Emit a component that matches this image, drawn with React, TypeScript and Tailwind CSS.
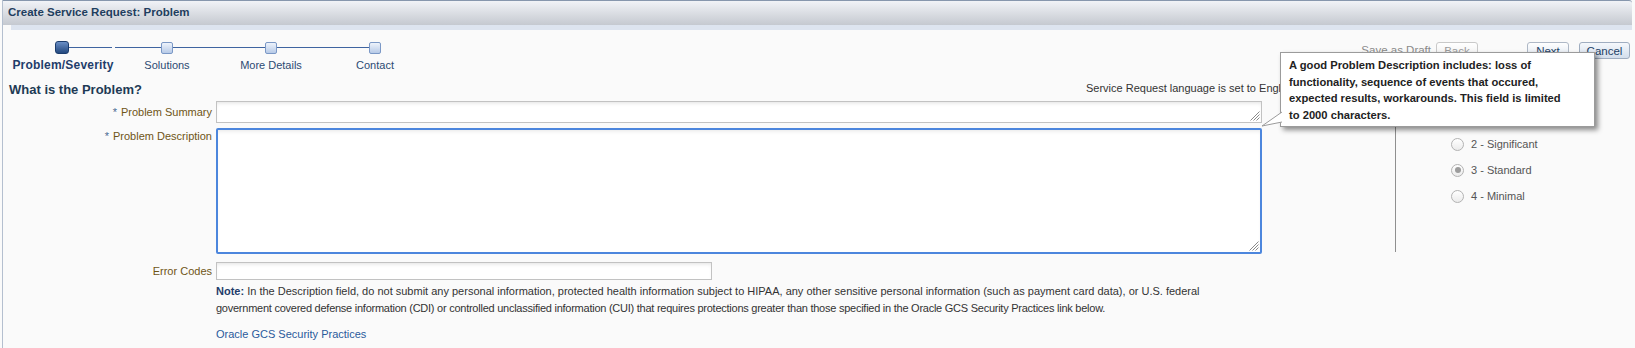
import React from "react";

// Create Service Request — "Problem" step, with the description hint bubble open.

const steps = [
  { label: "Problem/Severity", current: true },
  { label: "Solutions", current: false },
  { label: "More Details", current: false },
  { label: "Contact", current: false },
];

const severities = [
  { label: "1 - Critical", checked: false },
  { label: "2 - Significant", checked: false },
  { label: "3 - Standard", checked: true },
  { label: "4 - Minimal", checked: false },
];

function ResizeGrip() {
  return (
    <svg
      aria-hidden
      width="11"
      height="11"
      viewBox="0 0 11 11"
      className="absolute bottom-[1px] right-[1px]"
    >
      <path d="M10.5 1.5 L1.5 10.5 M10.5 4.5 L4.5 10.5 M10.5 7.5 L7.5 10.5" stroke="#8a8a8a" strokeWidth="1" />
    </svg>
  );
}

function TrainStep({ label, current, first, last }: { label: string; current: boolean; first: boolean; last: boolean }) {
  return (
    <div className="flex w-[104px] flex-col items-center">
      <div className="flex h-[13px] w-full items-center">
        <div className={"h-px flex-1 " + (first ? "bg-transparent" : "bg-[#3f64a0]")} />
        {current ? (
          <div className="h-[13px] w-[14px] rounded-[3px] border border-[#1c3d6e] bg-linear-to-b from-[#6a8fc6] to-[#23497f]" />
        ) : (
          <div className="h-[12px] w-[12px] rounded-[2px] border border-[#7b98c6] bg-linear-to-b from-[#eef3fb] to-[#b7cae7]" />
        )}
        <div
          className={
            "h-px flex-1 " + (last ? "bg-transparent" : "bg-[#3f64a0]") + (first ? " mr-[3px]" : "")
          }
        />
      </div>
      <div
        className={
          "mt-[4px] h-[14px] whitespace-nowrap leading-[14px] " +
          (current ? "text-[12px] font-bold tracking-[0.2px] text-[#1f3d6b]" : "text-[11px] text-[#2c4a73]")
        }
      >
        {label}
      </div>
    </div>
  );
}

function Radio({ label, checked }: { label: string; checked: boolean }) {
  return (
    <div className="flex h-[26px] items-center gap-[7px]">
      <span className="flex h-[13px] w-[13px] items-center justify-center rounded-full border border-[#b3b3b3] bg-linear-to-b from-white to-[#ebebeb]">
        {checked ? <span className="h-[6px] w-[6px] rounded-full bg-[#9c9c9c]" /> : null}
      </span>
      <span className="text-[11px] text-[#555]">{label}</span>
    </div>
  );
}

export default function App() {
  return (
    <div
      className="relative h-[348px] w-[1635px] overflow-hidden bg-[#fafafa] text-[11px] text-[#333]"
      style={{ fontFamily: '"Liberation Sans", Arial, sans-serif' }}
    >
      <div className="ml-[2px] mr-[3px] h-full border-l border-[#b4bfcf]">
        {/* Header */}
        <div className="flex h-[25px] items-center rounded-tr-[3px] border-t border-[#8797ad] bg-linear-to-b from-[#f1f3f7] to-[#c5c9d0] pl-[5px]">
          <span className="text-[11.5px] font-bold text-[#1f3e5e]">Create Service Request: Problem</span>
        </div>
        <div className="ml-[8px] h-[5px] bg-[#dde4ef]" />

        {/* Train + actions */}
        <div className="flex h-[51px]">
          <div className="ml-[8px] mt-[11px] flex">
            {steps.map((s, i) => (
              <TrainStep key={s.label} label={s.label} current={s.current} first={i === 0} last={i === steps.length - 1} />
            ))}
          </div>
          <div className="ml-auto mr-[2px] mt-[12px] flex h-[17px] items-center">
            <span className="mr-[5px] text-[11.5px] text-[#8a8a8a]">Save as Draft</span>
            <button className="h-[17px] w-[42px] rounded-[3px] border border-[#c9c9c9] bg-linear-to-b from-white to-[#eeeeee] text-[11.5px] text-[#9a9a9a]">
              Back
            </button>
            <button className="ml-[49px] h-[17px] w-[42px] rounded-[3px] border border-[#aeb8c6] bg-linear-to-b from-white to-[#dde5ef] text-[11.5px] text-[#1d3f66]">
              Next
            </button>
            <button className="ml-[10px] h-[17px] w-[51px] rounded-[3px] border border-[#9fadc0] bg-linear-to-b from-[#f5f8fc] to-[#d3deec] text-[11.5px] text-[#1d3f66]">
              Cancel
            </button>
          </div>
        </div>

        {/* Section title */}
        <div className="flex h-[18px] items-center">
          <div className="w-[1083px] pl-[6px] text-[13px] font-bold leading-[18px] text-[#1e3a55]">What is the Problem?</div>
          <div className="-mt-[3px] whitespace-nowrap text-[11px] text-[#333]">Service Request language is set to English.</div>
        </div>

        {/* Form + severity */}
        <div className="flex">
          <div className="w-[1259px]">
            <div className="mt-[2px] flex h-[22px] items-center">
              <div className="w-[209px] text-right text-[#6f5516]">
                <span className="mr-[4px] text-[#4a6a92]">*</span>Problem Summary
              </div>
              <div className="relative ml-[4px] h-[22px] flex-1 border border-[#c2c2c2] bg-white shadow-[inset_0_3px_4px_-2px_rgba(0,0,0,0.12)]">
                <ResizeGrip />
              </div>
            </div>

            <div className="mt-[5px] flex items-start">
              <div className="w-[209px] text-right leading-[16px] text-[#6f5516]">
                <span className="mr-[4px] text-[#4a6a92]">*</span>Problem Description
              </div>
              <div className="relative ml-[4px] h-[126px] flex-1 rounded-[2px] border-2 border-[#4c86dd] bg-white shadow-[inset_0_3px_4px_-2px_rgba(0,0,0,0.1)]">
                <ResizeGrip />
              </div>
            </div>

            <div className="mt-[8px] flex h-[18px] items-center">
              <div className="w-[209px] text-right text-[#6f5516]">Error Codes</div>
              <div className="ml-[4px] h-[18px] w-[496px] border border-[#c2c2c2] bg-white shadow-[inset_0_3px_4px_-2px_rgba(0,0,0,0.12)]" />
            </div>

            <div className="ml-[213px] mt-[3px] whitespace-nowrap leading-[17px] text-[#333]">
              <span className="font-bold text-[#1f3d6b]">Note:</span> In the Description field, do not submit any personal
              information, protected health information subject to HIPAA, any other sensitive personal information (such as
              payment card data), or U.S. federal
              <br />
              <span className="tracking-[-0.25px]">
                government covered defense information (CDI) or controlled unclassified information (CUI) that requires
                protections greater than those specified in the Oracle GCS Security Practices link below.
              </span>
            </div>

            <div className="ml-[213px] mt-[9px] leading-[17px] text-[#2a5a9c]">Oracle GCS Security Practices</div>
          </div>

          <div className="ml-[133px] h-[153px] border-l border-[#8f8f8f] pl-[55px] pt-[6px]">
            {severities.map((s) => (
              <Radio key={s.label} label={s.label} checked={s.checked} />
            ))}
          </div>
        </div>
      </div>

      {/* Hint bubble for Problem Description */}
      <div className="absolute left-[1280px] top-[52px] h-[75px] w-[315px] border border-[#9b9b9b] bg-white pl-[8px] pt-[4px] text-[11.2px] font-bold leading-[16.5px] text-[#222] shadow-[3px_3px_5px_rgba(0,0,0,0.45)]">
        A good Problem Description includes: loss of
        <br />
        functionality, sequence of events that occured,
        <br />
        expected results, workarounds. This field is limited
        <br />
        to 2000 characters.
      </div>
      <svg aria-hidden width="22" height="20" viewBox="0 0 22 20" className="absolute left-[1261px] top-[109px]">
        <polyline points="21,3 1,17 21,13" fill="white" stroke="#9b9b9b" strokeWidth="1" />
      </svg>
    </div>
  );
}
